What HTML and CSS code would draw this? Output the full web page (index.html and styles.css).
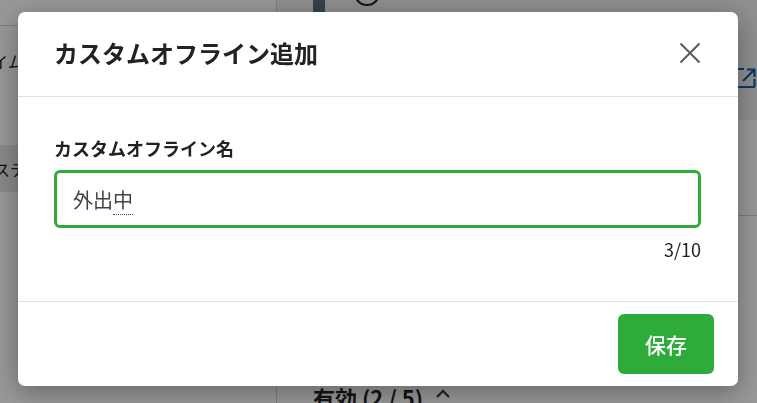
FILE: index.html
```html
<!DOCTYPE html>
<html lang="ja">
<head>
<meta charset="utf-8">
<title>カスタムオフライン追加</title>
<link rel="stylesheet" href="styles.css">
</head>
<body>
<div class="page">
  <aside class="sidebar">
    <div class="side-top"></div>
    <div class="side-item">タイムライン</div>
    <div class="side-item selected">システム設定</div>
  </aside>
  <main class="main">
    <div class="main-head">
      <div class="head-left">
        <span class="dark-block"></span>
        <svg class="circle-icon" width="28" height="28" viewBox="0 0 28 28"><circle cx="14" cy="14" r="12" fill="none" stroke="#222" stroke-width="2.2"/></svg>
      </div>
      <svg class="ext-icon" width="22" height="22" viewBox="0 0 22 22"><path d="M9 2H3a1.5 1.5 0 0 0-1.5 1.5v15A1.5 1.5 0 0 0 3 20h15a1.5 1.5 0 0 0 1.5-1.5V12" fill="none" stroke="#0b63b0" stroke-width="2.2"/><path d="M8 14L19 3M12 2.5h7.5V10" fill="none" stroke="#0b63b0" stroke-width="2.2"/></svg>
    </div>
    <div class="main-row"></div>
    <div class="section-title">有効 (2 / 5)
      <svg class="caret" width="16" height="10" viewBox="0 0 16 10"><path d="M2 8L8 2L14 8" fill="none" stroke="#333" stroke-width="2"/></svg>
    </div>
  </main>
</div>
<div class="overlay"></div>
<div class="modal" role="dialog">
  <div class="modal-header">
    <h2 class="modal-title">カスタムオフライン追加</h2>
    <button class="close-btn" aria-label="閉じる">
      <svg width="22" height="22" viewBox="0 0 22 22"><path d="M1.5 1.5L20.5 20.5M20.5 1.5L1.5 20.5" stroke="#5a5a5a" stroke-width="2" fill="none"/></svg>
    </button>
  </div>
  <div class="modal-body">
    <div class="field-label">カスタムオフライン名</div>
    <div class="text-input">外出<span class="ime">中</span></div>
    <div class="counter">3/10</div>
  </div>
  <div class="modal-footer">
    <button class="save-btn">保存</button>
  </div>
</div>
</body>
</html>
```
FILE: styles.css
```css
* { box-sizing: border-box; }
html, body {
  margin: 0;
  width: 757px;
  height: 403px;
  overflow: hidden;
}
body {
  font-family: "Noto Sans CJK JP", "Noto Sans", sans-serif;
  background: #fff;
  color: #222;
}
.page {
  display: flex;
  height: 403px;
}
.sidebar {
  width: 277px;
  flex: none;
  border-right: 1px solid #d8d8d8;
  overflow: hidden;
}
.side-top {
  height: 26px;
  border-bottom: 1px solid #cfcfcf;
}
.side-item {
  font-size: 16px;
  line-height: 24px;
  white-space: nowrap;
  color: #222;
}
.side-item:nth-child(2) {
  padding: 23px 0;
  text-indent: -24px;
}
.side-item.selected {
  margin-top: 49px;
  padding: 12px 0 11px;
  text-indent: -22px;
  background: #e7e7e7;
}
.main {
  flex: 1;
  display: flex;
  flex-direction: column;
  overflow: hidden;
}
.main-head {
  height: 120px;
  flex: none;
  background: #f1f1f1;
  display: flex;
  justify-content: space-between;
  padding-left: 36px;
}
.head-left {
  display: flex;
  align-items: flex-start;
  gap: 28px;
}
.dark-block {
  width: 12px;
  height: 12px;
  background: #58717f;
}
.circle-icon {
  margin-top: -21px;
}
.ext-icon {
  margin-top: 67px;
}
.main-row {
  height: 96px;
  flex: none;
  border-bottom: 1px solid #cfcfcf;
}
.section-title {
  margin-top: 166px;
  padding-left: 36px;
  font-size: 22px;
  font-weight: 700;
  line-height: 30px;
  color: #222;
  white-space: nowrap;
  display: flex;
  align-items: center;
  gap: 12px;
}
.caret {
  flex: none;
  margin-top: -6px;
}
.overlay {
  position: fixed;
  inset: 0;
  background: rgba(0, 0, 0, 0.4);
}
.modal {
  position: absolute;
  top: 12px;
  left: 18px;
  width: 720px;
  background: #fff;
  border-radius: 7px;
  box-shadow: 0 6px 28px rgba(0, 0, 0, 0.35);
  display: flex;
  flex-direction: column;
}
.modal-header {
  height: 85px;
  border-bottom: 1px solid #e2e2e2;
  display: flex;
  align-items: center;
  justify-content: space-between;
  padding: 0 37px 2px 36px;
}
.modal-title {
  margin: 0;
  font-size: 24px;
  font-weight: 700;
  color: #222;
  line-height: 32px;
}
.close-btn {
  border: 0;
  background: none;
  padding: 0;
  width: 22px;
  height: 22px;
  display: flex;
}
.modal-body {
  padding: 39px 37px 40px 36px;
  display: flex;
  flex-direction: column;
}
.field-label {
  font-size: 18px;
  font-weight: 700;
  line-height: 24px;
  color: #222;
}
.text-input {
  margin-top: 10px;
  height: 58px;
  border: 3px solid #2eab3b;
  border-radius: 6px;
  display: flex;
  align-items: center;
  padding-left: 16px;
  font-size: 20px;
  color: #444;
}
.ime {
  border-bottom: 1px dotted #444;
  line-height: 24px;
  padding-bottom: 2px;
  margin-top: 4px;
}
.counter {
  margin-top: 9px;
  text-align: right;
  font-size: 18px;
  line-height: 24px;
  color: #222;
}
.modal-footer {
  border-top: 1px solid #e2e2e2;
  padding: 12px 24px 12px;
  display: flex;
  justify-content: flex-end;
}
.save-btn {
  width: 96px;
  height: 60px;
  border: 0;
  border-radius: 6px;
  background: #2eab3b;
  color: #fff;
  font-family: "Noto Sans CJK JP", "Noto Sans", sans-serif;
  font-size: 21px;
  font-weight: 500;
}
```
